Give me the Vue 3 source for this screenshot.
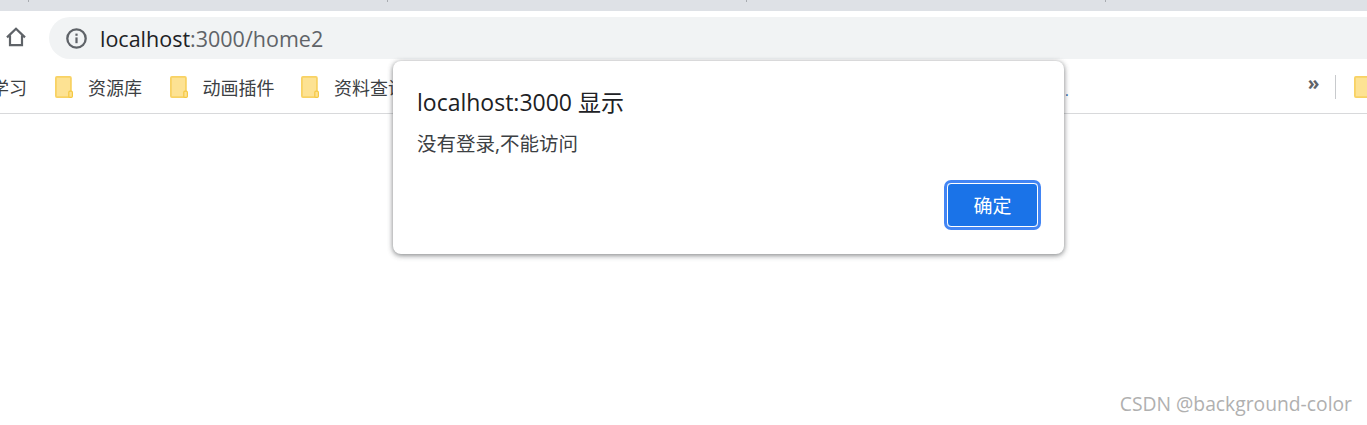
<template>
  <div class="page">
    <div class="tabstrip">
      <i v-for="n in 4" :key="n" class="tab-sep" />
    </div>

    <div class="toolbar">
      <svg class="home" width="20" height="20" viewBox="0 0 20 20" fill="none">
        <path d="M1 10.4 10 1.8l9 8.6M4 8.4v9.8h12V8.4" stroke="#5f6368" stroke-width="2.2" />
      </svg>
      <div class="omnibox">
        <svg class="info" width="21" height="21" viewBox="0 0 21 21" fill="none">
          <circle cx="10.5" cy="10.5" r="9.2" stroke="#5f6368" stroke-width="2.3" />
          <rect x="9.4" y="9.4" width="2.2" height="5.8" fill="#5f6368" />
          <rect x="9.4" y="5.6" width="2.2" height="2.2" fill="#5f6368" />
        </svg>
        <span class="url"><span class="host">localhost</span>:3000/home2</span>
      </div>
    </div>

    <div class="bookmarks">
      <span class="mark-first">学习</span>
      <div v-for="b in marks" :key="b.name" class="mark" :style="{ width: b.width + 'px' }">
        <svg class="folder" width="18" height="22" viewBox="0 0 18 22">
          <rect x="0.9" y="0.9" width="15" height="20.2" rx="1" fill="#fde293" stroke="#f8d264" stroke-width="1.8" />
          <rect x="13.8" y="15.2" width="3.6" height="6.2" rx="1.2" fill="#fde293" stroke="#f5c842" stroke-width="1.2" />
        </svg>
        <span class="mark-name">{{ b.name }}</span>
      </div>
      <span class="hidden-tail">.</span>
      <span class="more">»</span>
      <i class="mark-sep" />
      <svg class="folder" width="18" height="22" viewBox="0 0 18 22">
        <rect x="0.9" y="0.9" width="15" height="20.2" rx="1" fill="#fde293" stroke="#f8d264" stroke-width="1.8" />
      </svg>
    </div>

    <div class="dialog">
      <div class="title">localhost:3000 显示</div>
      <div class="msg">没有登录,不能访问</div>
      <div class="actions">
        <button class="ok">确定</button>
      </div>
    </div>

    <div class="watermark">CSDN @background-color</div>
  </div>
</template>

<script setup>
const marks = [
  { name: '资源库', width: 114.5 },
  { name: '动画插件', width: 131.5 },
  { name: '资料查询', width: 132 },
]
</script>

<style>
html,
body {
  margin: 0;
  background: #fff;
  overflow: hidden;
}
</style>

<style scoped>
.page {
  position: relative;
  width: 1367px;
  height: 425px;
  overflow: hidden;
  font-family: "Open Sans", "Noto Sans CJK SC", sans-serif;
  background: #fff;
}

.tabstrip {
  height: 11px;
  background: #dee1e6;
  display: flex;
  padding-left: 28px;
  gap: 358px;
}

.tab-sep {
  width: 1px;
  height: 2px;
  background: #a9acb1;
}

.toolbar {
  height: 48px;
  display: flex;
  align-items: flex-start;
  padding-top: 6px;
  box-sizing: border-box;
}

.home {
  margin: 10px 0 0 6px;
}

.omnibox {
  margin-left: 23px;
  flex: 1;
  height: 42px;
  border-radius: 21px 0 0 21px;
  background: #f1f3f4;
  display: flex;
  align-items: center;
  padding-left: 17px;
  gap: 13px;
}

.url {
  font-size: 21.5px;
  color: #5f6368;
}

.host {
  color: #202124;
}

.bookmarks {
  height: 55px;
  box-sizing: border-box;
  border-bottom: 1px solid #d8d9db;
  display: flex;
  align-items: center;
  font-size: 18px;
  color: #3c4043;
  white-space: nowrap;
  padding-top: 1px;
}

.mark-first {
  margin-left: -9px;
  width: 64px;
  flex: none;
}

.mark {
  display: flex;
  align-items: center;
  gap: 15px;
  flex: none;
}

.folder {
  flex: none;
}

.hidden-tail {
  margin-left: 632px;
  color: #1a5fa8;
  font-size: 14px;
  margin-top: 8px;
}

.more {
  margin-left: 239px;
  font-size: 19px;
  font-weight: 700;
  color: #5f6368;
  line-height: 1;
  margin-top: -6px;
}

.mark-sep {
  flex: none;
  width: 1px;
  height: 24px;
  background: #c8cacd;
  margin: 0 18px 0 16px;
}

.dialog {
  position: absolute;
  left: 393px;
  top: 61px;
  width: 671px;
  height: 193px;
  box-sizing: border-box;
  padding: 26px 24px 0;
  background: #fff;
  border-radius: 8px;
  box-shadow: 0 1px 5px rgba(60, 64, 67, 0.55), 0 2px 6px rgba(60, 64, 67, 0.2);
  color: #202124;
}

.title {
  font-size: 23px;
  line-height: 30px;
}

.msg {
  font-size: 19.5px;
  line-height: 26px;
  margin-top: 14px;
  color: #3c4043;
}

.actions {
  display: flex;
  justify-content: flex-end;
  margin-top: 26px;
}

.ok {
  width: 89px;
  height: 42px;
  box-sizing: content-box;
  padding: 0;
  border: 1px solid #fff;
  outline: 3px solid #4285f4;
  border-radius: 4px;
  background: #1a73e8;
  color: #fff;
  font-family: inherit;
  font-size: 19px;
  margin-right: 2px;
}

.watermark {
  position: absolute;
  right: 15px;
  top: 390px;
  font-size: 19.3px;
  color: #b0b0b0;
}
</style>
